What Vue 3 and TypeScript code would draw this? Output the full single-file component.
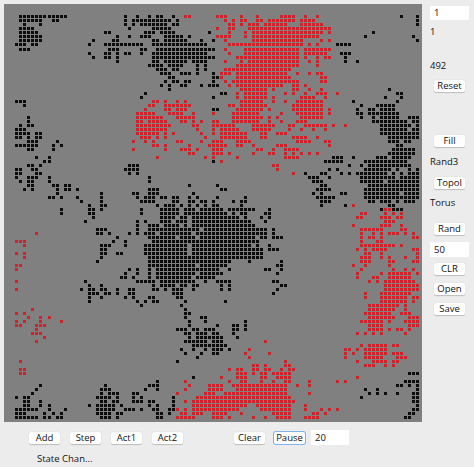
<script setup lang="ts">
const PITCH = 4.01
const black: string[] = [
  '3:4-15 30 33 36 38 39 42', '4:4-9 12 13 30 32-41 43', '5:5 9 30 32 34-40 42 43', '6:4-7 31 37-41',
  '7:4-8 25 26 35-37 39-42 51', '8:4-9 28 31 34-36 40-44 46', '9:4-9 22 27 28 37 38 40-45 49',
  '10:3 4 5 7 8 21 25-34 37-50', '11:4-6 26-28 34 35 38-51', '12:21 25 26 28 30 31 34 37-50',
  '13:22 25 26 28 37-51', '14:28 37 38 40-45 47-50', '15:36-39 41-44 48 50', '16:38-40 42 43 48 50',
  '17:39-41 44-46 48 52', '18:41 42 52', '19:40 42 43 45 46 52', '20:39 41 44 45 49 51 52', '21:41',
  '22:35', '23:34 52', '24:3-5', '25:5', '27:52', '28:6', '29:6', '30:4 6 7', '31:3-5', '32:3-6 8 9',
  '33:3 4 6 8 9', '34:6-8 13', '35:3-8 12 14', '36:6 7 12', '38:8 11', '39:10 11 52', '40:6 7 9 31-33',
  '41:3 4 7 8 30-33', '42:3 4 8 9 31 33', '43:3 6-8 11 36', '44:4 6 7 11 36', '45:6 7 12 13 15 16 46',
  '46:5 7 13 15 16 18 36-38', '47:13 24 32 33 36-38 47', '48:11 12 14 18 24 33 35-37 39 40 42 43 46 48',
  '49:19 24 34-37 42 43 46 47 49 50 52', '50:21 24 25 38 40 41 42 44 46 48 50',
  '51:14 21 22 24 34 39-43 45-47 49-51',
  // top right
  '3:99 103', '4:103', '5:103', '7:92', '8:90 102', '9:52 103', '10:83-86', '11:52', '12:84-86', '13:85 52',
  '14:85 88', '17:52', '18:53', '19:52', '20:53', '21:96', '22:54 55 98 99', '23:95 99', '24:87 98',
  '25:89 93-97', '26:52 53 88 91 92 94-97', '27:88 89 91-98', '28:89 92 94-98 101-103', '29:92-100 102 103',
  '30:94-101 103', '31:94-100 102 103', '32:94-103', '33:96-103', '34:96-98 100 101', '35:98 99',
  '36:97-102', '37:96-102', '38:82-84 87 93-95 97-101', '39:80-84 90-100', '40:86 89 91-101',
  '41:81 83 90-96 98 101 103', '42:75 79 80 84 86 88-95 97 99 101-103', '43:76 77 78 81 89-97 99-103',
  '44:77 78 79 89-94 96-103', '45:53 79 80 91-103', '46:54 55 78-81 90-103', '47:77 79 84 85 90-98 100-103',
  '48:53 60 78-82 90-103', '49:57 59 60 79-81 91 92 94-96 98 100-102', '50:52 53 59 79 85 96 97',
  '51:52-54 56-62 66 94-99',
  // bottom left + mass
  '52:14 21 22 34 39-43 45 46 47-55 57 59 60 65 66', '53:22 39-42 44 45 47-58 60 64 66',
  '54:20 33 35 39-41 43-45 47-61 65', '55:33 36-38 40-43 45 47-62', '56:23-25 33 36-48 50-65 67',
  '57:23 24 26 31 33 35-37 39-46 48-65 67', '58:28 36-42 44-47 49-62 64 65 67-69', '59:27 30 37-63',
  '60:24-26 30 35-45 47-61 63 66', '61:24 25 35-45 47-64 66-68', '62:24 25 28 29 35-45 47-64',
  '63:24 36-64', '64:23 36-56 61 69', '65:36-47 49-55 68 69', '66:31 33 36 38-53 56 65 66 69',
  '67:30 33 36 38-47 49-54 68', '68:29 30 32 36 38-46 48-52', '69:20 33-37 39-47 50 53-56 67 68',
  '70:21 24 37 39-42 44 45 47 48 54 56 69 70', '71:19 21 22 24 25 28 31 32 37 38 40 42-44 47 54 56 68',
  '72:21 22 23 25 26 28 31 32 42-44 67', '73:21 24 30 32 36 37 43 44', '74:21 33 35 37 38 45 55', '75:34 44',
  '76:45', '77:45 46', '78:45 49 50', '79:46 50 60', '80:46 53 57 58 60', '81:43-45 47 48 50-52 57 58 60',
  '82:45 46 48 49 50 52 53 57', '83:46 48-51 52-54 58', '84:45-50 52-54', '85:47-51 52-55', '86:44 47 50 52-54 56',
  '87:45 49 52 53', '88:48', '89:43', '93:47', '94:38', '95:9 25 36-38', '96:8 24-26 35 38',
  '97:7 24 26-28 32 33', '98:3 5 6 23-25 26 28 32 34 42', '99:5 6 9 24 25 27 28 32-34 36 37 42',
  '100:5 6 9 11 21 23-27 29 36 38 42', '101:3-8 11 15 23-27 30-32 34 37 38 41 42',
  '102:3-5 10 12 14 23-26 28 29 38 39 41', '103:3-8 10 11 13 14 24-26 28 38 39',
  // bottom right corner
  '92:101-103', '94:100-103', '95:98 99 101 103', '96:90 93 103', '97:91 93 95 98 102 103', '98:89 102 103',
  '99:102 103', '100:103', '101:102 103', '102:101 102', '103:100 101',
]
const red: string[] = [
  '3:45 46', '24:37 38 40 43 45', '25:36 37 40-43 44-46', '26:35 40 41 43-45', '27:33-37 41-44 47 52',
  '28:33-39 43-47', '29:33 34 36-40 44 45 47 49', '30:33-41 47 48', '31:33-40 48 52', '32:33-38 40 42 49 52',
  '33:34-36 38 40 50', '34:32 35 37 43 44 49', '35:37 38 40 46 51', '36:32 40 44-46 48 52', '37:46 47 52',
  '38:38 50 52',
  // top right
  '3:53-55 59 63 69-72 75 78', '4:55 57 59 60 63 64 66-72 74-77', '5:56 57 59 61-63 65-70 74-79',
  '6:53 56 57 61-81', '7:56 60 62-78 79 81', '8:53-56 60 62-75 76-78', '9:55 62-74 79 81',
  '10:56-60 61-74 76 78', '11:55 60-73 75-81', '12:56 60-73 75-80', '13:58 59 60-73 75 78 80 81',
  '14:55 59 61-73 76 78', '15:58-73 78', '16:55-57 58-71', '17:54-56 58-70 73 76 78 79', '18:54 58-71 79 80',
  '19:55 57-73 79 80', '20:56 58-69 72 73 75', '21:59-65 67 72 73 76 79', '22:58 60-65 70 72 75 78-80 83',
  '23:58 60-65 67 74-77 80', '24:59-64 67 70 73-79', '25:56 57 59-65 72-79', '26:58-64 66 72-79 81',
  '27:57-63 69 73-79 81', '28:57-64 66 68 74-79', '29:52 53 57-63 66 69 73-75', '30:52-57 62-67 71 72 75-80 82 85',
  '31:54-58 62-66 71 74 77 80', '32:54-60 64 65 68-70', '33:54-60 64 65 72-75 78', '34:52-54 58-61 73-76 80 81',
  '35:52-55 58 59 62 68-70 81', '36:52-54 63 64 67 70-73', '37:52-54 56 62 66 67 70 72 74 76 78', '38:58 70-73',
  '39:54', '40:67 68', '41:68', '42:72', '50:87', '51:95 96',
  // bottom left
  '57:8', '59:3-5', '60:5', '62:3 5', '63:5', '65:3 4', '66:3', '69:3', '71:3', '76:7', '77:3 5', '78:6 9 11',
  '79:3 5 9 14', '80:3 4 8-10', '81:8', '82:7-9', '83:10', '84:8', '89:4', '91:4 5', '92:4 5', '94:45',
  '95:46 51 52', '96:45 51 52', '97:43 50-52', '98:48-52', '99:45 47-52', '100:47-52', '101:43 45 47-51',
  '102:44 45 47-49', '103:43-47 52',
  // bottom right
  '52:89 90 95 97 99', '53:88 89 94-96 98 99', '54:95-97', '55:87 94-96 99', '56:89-94 99 100',
  '57:89 92 94 96-98 100 102', '58:89 91 92 94 102 103', '59:89 93 94', '60:89-97 99', '61:88 90 92-95 102 103',
  '62:90 91 94 103', '63:89-91 94 96 100 103', '64:89-91 96 97 102 103', '65:87 90 96', '66:89 97 100 102',
  '67:88 94 96-101 103', '68:88 92 93 96-101', '69:91 93 95-102', '70:95-103', '71:95-103', '72:90 94-101',
  '73:90 94-100 102 103', '74:94-100 102', '75:91-98 100', '76:91-97 100', '77:90-96 99-101', '78:91-97 101-103',
  '79:89-94 96 100-103', '80:91-94 101-103', '81:91-94 96 98 99 101', '82:88 90 92 94 100', '84:65', '85:89 91-95 97 98',
  '86:61 85 86 88 90-95', '87:60 66 85 87 90-95 97-99', '88:61 85 90-94 98-100', '89:70 88 92-95 97 98',
  '90:62 63 65 70 71 90-92 95 97', '91:56 58 59 62 63 65 66 69 71 72', '92:58-60 62 64 65 67-71',
  '93:54 58-60 64 65 68-71 88', '94:56 59 60 64 67 70 71 76 83 85', '95:52 53 54 57-70 73 76', '96:53 54 58-70',
  '97:55-70 76', '98:53-71', '99:52-72', '100:52-60 63-71 75', '101:52-58 64-71 75 79 81 83',
  '102:52-55 59 67-71 77 78 80', '103:52-54 56 62 65 68-71 75-78',
]

interface Dot { x: number; y: number }

function expand(list: string[]): Dot[] {
  const out: Dot[] = []
  for (const line of list) {
    const [rowText, spec] = line.split(':')
    const row = Number(rowText)
    for (const part of spec.split(' ')) {
      const [a, b] = part.split('-').map(Number)
      for (let c = a; c <= (b ?? a); c++) {
        out.push({ x: Math.round(PITCH * c - 0.6), y: Math.round(PITCH * row - 0.6) })
      }
    }
  }
  return out
}
const blackDots = expand(black)
const redDots = expand(red)
</script>

<template>
  <div class="app">
    <div class="main">
      <svg class="board" width="418" height="418" viewBox="0 0 418 418">
        <rect v-for="(d, i) in blackDots" :key="'b' + i" :x="d.x" :y="d.y" width="3" height="3" fill="#0c0c0c" />
        <rect v-for="(d, i) in redDots" :key="'r' + i" :x="d.x" :y="d.y" width="3" height="3" fill="#d0222a" />
      </svg>
      <aside class="side">
        <div class="field top">1</div>
        <div class="label l1">1</div>
        <div class="label l2">492</div>
        <button class="btn b-reset">Reset</button>
        <button class="btn b-fill">Fill</button>
        <div class="label l3">Rand3</div>
        <button class="btn b-topol">Topol</button>
        <div class="label l4">Torus</div>
        <button class="btn b-rand">Rand</button>
        <div class="field f50">50</div>
        <button class="btn b-clr">CLR</button>
        <button class="btn b-open">Open</button>
        <button class="btn b-save">Save</button>
      </aside>
    </div>
    <div class="controls">
      <button class="btn">Add</button>
      <button class="btn">Step</button>
      <button class="btn">Act1</button>
      <button class="btn">Act2</button>
      <button class="btn clear">Clear</button>
      <button class="btn pause">Pause</button>
      <div class="field f20">20</div>
    </div>
    <div class="status">State Chan...</div>
  </div>
</template>

<style scoped>
.app {
  width: 474px;
  height: 467px;
  background: #ececec;
  font-family: "Open Sans", sans-serif;
  font-size: 9.5px;
  color: #111;
  overflow: hidden;
  padding: 4px 0 0 4px;
  box-sizing: border-box;
}
.main {
  display: flex;
  height: 418px;
}
.board {
  background: #808080;
  flex: none;
  display: block;
}
.side {
  display: flex;
  flex-direction: column;
  align-items: flex-start;
  margin-left: 8px;
  width: 44px;
}
.btn {
  width: 31px;
  height: 12px;
  padding: 0;
  border: none;
  border-radius: 2px;
  background: #fff;
  box-shadow: 0 0.5px 1px rgba(0, 0, 0, 0.2);
  font: inherit;
  color: inherit;
  line-height: 12px;
  text-align: center;
  flex: none;
}
.side .btn {
  margin-left: 4px;
}
.field {
  width: 39px;
  background: #fff;
  flex: none;
  box-sizing: border-box;
  padding-left: 4px;
}
.top {
  height: 14px;
  margin-top: 2px;
  line-height: 14px;
}
.label {
  height: 12px;
  line-height: 12px;
  flex: none;
}
.l1 { margin-top: 6px; }
.l2 { margin-top: 22px; }
.b-reset { margin-top: 8px; }
.b-fill { margin-top: 43px; }
.l3 { margin-top: 9px; }
.b-topol { margin-top: 9px; }
.l4 { margin-top: 8px; }
.b-rand { margin-top: 14px; }
.f50 { height: 15px; line-height: 15px; margin-top: 7px; }
.b-clr { margin-top: 6px; }
.b-open { margin-top: 8px; }
.b-save { margin-top: 8px; }
.controls {
  display: flex;
  align-items: center;
  gap: 10px;
  margin-top: 8px;
  padding-left: 25px;
  height: 15px;
}
.clear { margin-left: 41px; }
.pause {
  margin-left: -1px;
  box-shadow: 0 0 0 1px #7fb2e5;
}
.f20 { width: 38px; height: 15px; line-height: 15px; margin-left: -4px; padding-left: 4px; }
.status {
  margin: 8px 0 0 33px;
  line-height: 12px;
}
</style>
